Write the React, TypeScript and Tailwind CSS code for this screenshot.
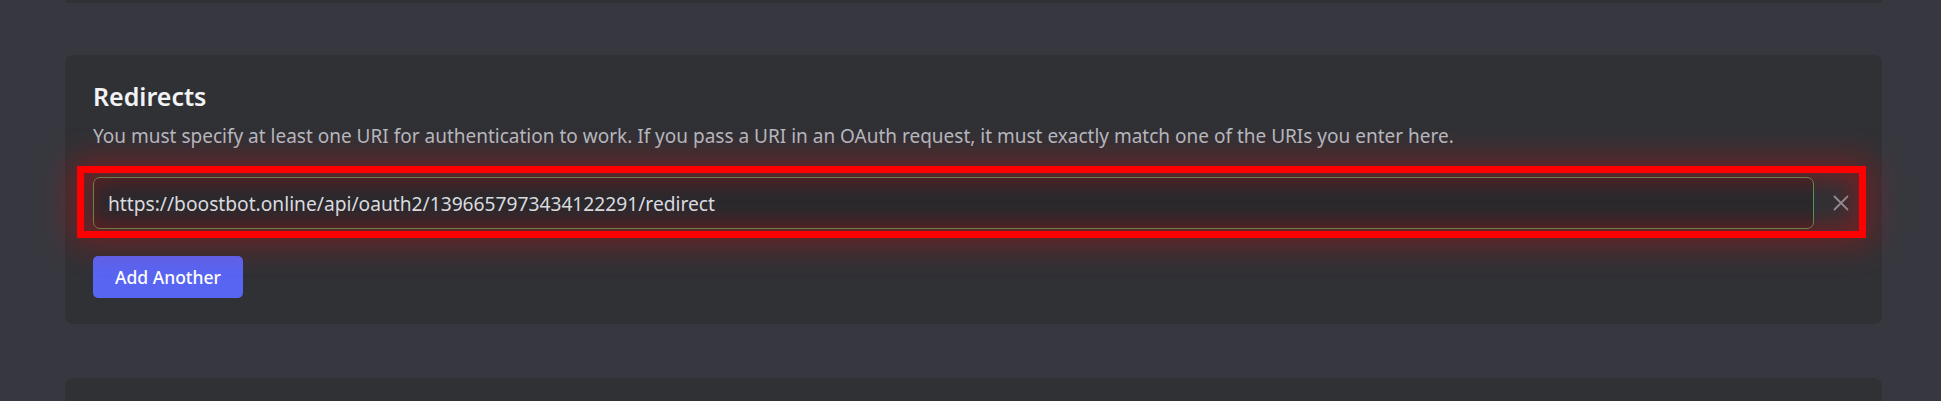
import { useState } from 'react';

const redirectUrl = 'https://boostbot.online/api/oauth2/1396657973434122291/redirect';

function CloseIcon() {
	return (
		<svg width="16" height="16" viewBox="0 0 16 16" fill="none" aria-hidden="true">
			<path d="M1.5 1.5L14.5 14.5M14.5 1.5L1.5 14.5" stroke="currentColor" strokeWidth="1.8" strokeLinecap="round" />
		</svg>
	);
}

export default function App() {
	const [uri, setUri] = useState(redirectUrl);

	return (
		<div className="h-[401px] overflow-hidden bg-[#37383f] pl-[65px] pr-[59px] font-['Noto_Sans',sans-serif]">
			<div className="h-[3px] rounded-b-lg bg-[#303135]" />

			<section className="mt-[52px] rounded-lg bg-[#303135] px-[28px] pt-[26px] pb-[26px]">
				<h2 className="text-[25px] leading-[30px] font-semibold text-[#f2f3f5]">Redirects</h2>
				<p className="mt-[12px] text-[19px] leading-[26px] text-[#b5bac1]">
					You must specify at least one URI for authentication to work. If you pass a URI in an OAuth request, it must
					exactly match one of the URIs you enter here.
				</p>

				<div className="relative mt-[28px] flex items-center">
					<input
						value={uri}
						onChange={(e) => setUri(e.target.value)}
						className="h-[52px] flex-1 rounded-[7px] border border-[#4f9a55] bg-[#29292d] px-[14px] text-[19.2px] text-[#dbdee1] outline-none"
					/>
					<button type="button" className="flex w-[40px] items-center justify-end pr-[5px] text-[#8e9096]" aria-label="Remove">
						<CloseIcon />
					</button>
					<div
						aria-hidden="true"
						className="pointer-events-none absolute -top-[11px] -right-[12px] -bottom-[9px] -left-[16px] border-[7px] border-[#ff0000] shadow-[0_0_32px_6px_rgba(255,0,0,0.3),inset_0_0_24px_6px_rgba(255,0,0,0.3)]"
					/>
				</div>

				<button
					type="button"
					className="mt-[27px] h-[42px] w-[150px] rounded-[5px] bg-[#5865f2] text-[17.5px] font-medium text-white"
				>
					Add Another
				</button>
			</section>

			<div className="mt-[54px] h-[40px] rounded-t-lg bg-[#303135]" />
		</div>
	);
}
